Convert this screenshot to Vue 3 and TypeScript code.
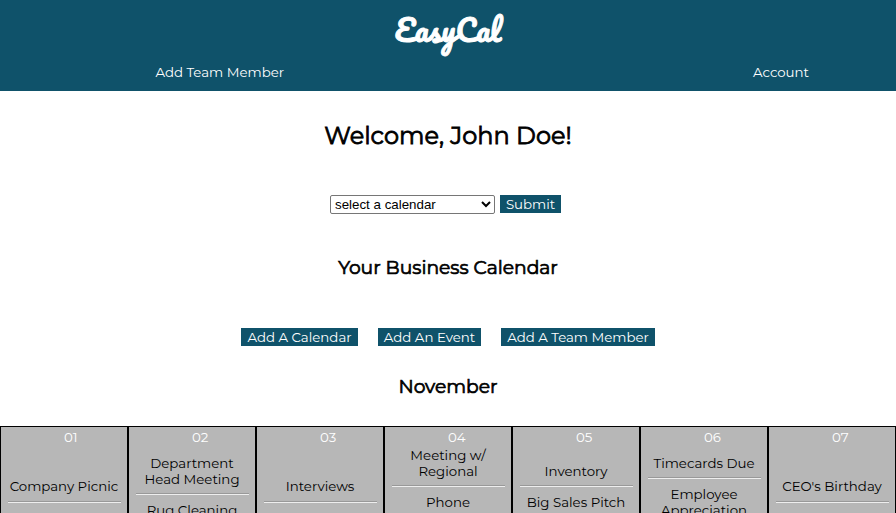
<script setup lang="ts">
import { ref } from 'vue'

interface Day {
  number: string
  offset: number
  events: string[][]
}

const selected = ref('')

const actions: { label: string; kind: string }[] = [
  { label: 'Add A Calendar', kind: 'add-calendar' },
  { label: 'Add An Event', kind: 'add-event' },
  { label: 'Add A Team Member', kind: 'add-member' },
]

const days: Day[] = [
  { number: '01', offset: 33.25, events: [['Company Picnic']] },
  { number: '02', offset: 10, events: [['Department', 'Head Meeting'], ['Rug Cleaning']] },
  { number: '03', offset: 33.25, events: [['Interviews']] },
  { number: '04', offset: 2, events: [['Meeting w/', 'Regional'], ['Phone']] },
  { number: '05', offset: 18, events: [['Inventory'], ['Big Sales Pitch']] },
  { number: '06', offset: 10, events: [['Timecards Due'], ['Employee', 'Appreciation']] },
  { number: '07', offset: 33.25, events: [["CEO's Birthday"]] },
]
</script>

<template>
  <div class="page">
    <header class="header">
      <div class="logo">EasyCal</div>
      <nav class="nav">
        <a class="nav-link">Add Team Member</a>
        <a class="nav-link">Account</a>
      </nav>
    </header>

    <main class="main">
      <h1 class="welcome">Welcome, John Doe!</h1>
      <form class="picker" @submit.prevent>
        <select v-model="selected" class="select">
          <option value="">select a calendar</option>
        </select>
        <button class="button submit">Submit</button>
      </form>
      <h2 class="subtitle">Your Business Calendar</h2>
      <div class="actions">
        <button v-for="a in actions" :key="a.kind" class="button" :class="a.kind">{{ a.label }}</button>
      </div>
      <h2 class="month">November</h2>
      <section class="calendar">
        <article v-for="day in days" :key="day.number" class="day">
          <div class="number">{{ day.number }}</div>
          <div class="events" :style="{ paddingTop: day.offset + 'px' }">
            <div v-for="(event, i) in day.events" :key="i" class="event">
              <div v-for="line in event" :key="line">{{ line }}</div>
              <hr class="rule" />
            </div>
          </div>
        </article>
      </section>
    </main>
  </div>
</template>

<style>
body {
  margin: 0;
  overflow: hidden;
}
</style>

<style scoped>
.page {
  height: 513px;
  overflow: hidden;
  background: #fff;
  color: #000;
  font-family: Montserrat, Inter, sans-serif;
  font-size: 13.333px;
}
.header {
  height: 91px;
  background: #0f526a;
  color: #fff;
  display: flex;
  flex-direction: column;
  align-items: center;
}
.logo {
  height: 60px;
  font-family: Pacifico, Lato, cursive;
  font-size: 29.8px;
  line-height: 58px;
  -webkit-text-stroke: 1px #fff;
}
.nav {
  display: flex;
  justify-content: space-between;
  width: 100%;
  box-sizing: border-box;
  padding: 4px 87px 0 155.4px;
  line-height: 16px;
}
.main {
  display: flex;
  flex-direction: column;
  align-items: center;
}
.welcome {
  margin: 30px 0 0;
  font-size: 24px;
  line-height: 30px;
  font-weight: 400;
  -webkit-text-stroke: 0.8px #000;
}
.picker {
  display: flex;
  gap: 5px;
  margin: 44px 5px 0 0;
}
.select {
  box-sizing: border-box;
  width: 165px;
  height: 19px;
  margin: 0;
  padding: 0;
  border: 1px solid #767676;
  border-radius: 2px;
  background: #fff;
  color: #000;
  font: 13.333px "Liberation Sans", sans-serif;
}
.button {
  box-sizing: border-box;
  height: 18px;
  margin: 0;
  padding: 0;
  border: 0;
  background: #0f526a;
  color: #fff;
  font-family: inherit;
  font-size: 13.333px;
  line-height: 18px;
  white-space: nowrap;
}
.submit {
  width: 61px;
}
.add-calendar {
  width: 117px;
}
.add-event {
  width: 103px;
}
.add-member {
  width: 154px;
}
.subtitle,
.month {
  margin: 42px 0 0;
  font-size: 18.72px;
  line-height: 24px;
  font-weight: 400;
  -webkit-text-stroke: 0.7px #000;
}
.actions {
  display: flex;
  gap: 20px;
  margin-top: 48px;
}
.month {
  margin-top: 29px;
}
.calendar {
  display: grid;
  grid-template-columns: repeat(7, 1fr);
  width: 100%;
  margin-top: 27px;
}
.day {
  box-sizing: border-box;
  height: 128px;
  border: 1px solid #000;
  background: #b7b7b7;
  text-align: center;
  line-height: 16px;
}
.number {
  padding: 2px 0 0 63px;
  color: #fff;
  text-align: left;
}
.rule {
  height: 2px;
  margin: 6.25px 6px 6.75px 7px;
  border: 0;
  background: linear-gradient(#999 50%, #eee 50%);
}
</style>
